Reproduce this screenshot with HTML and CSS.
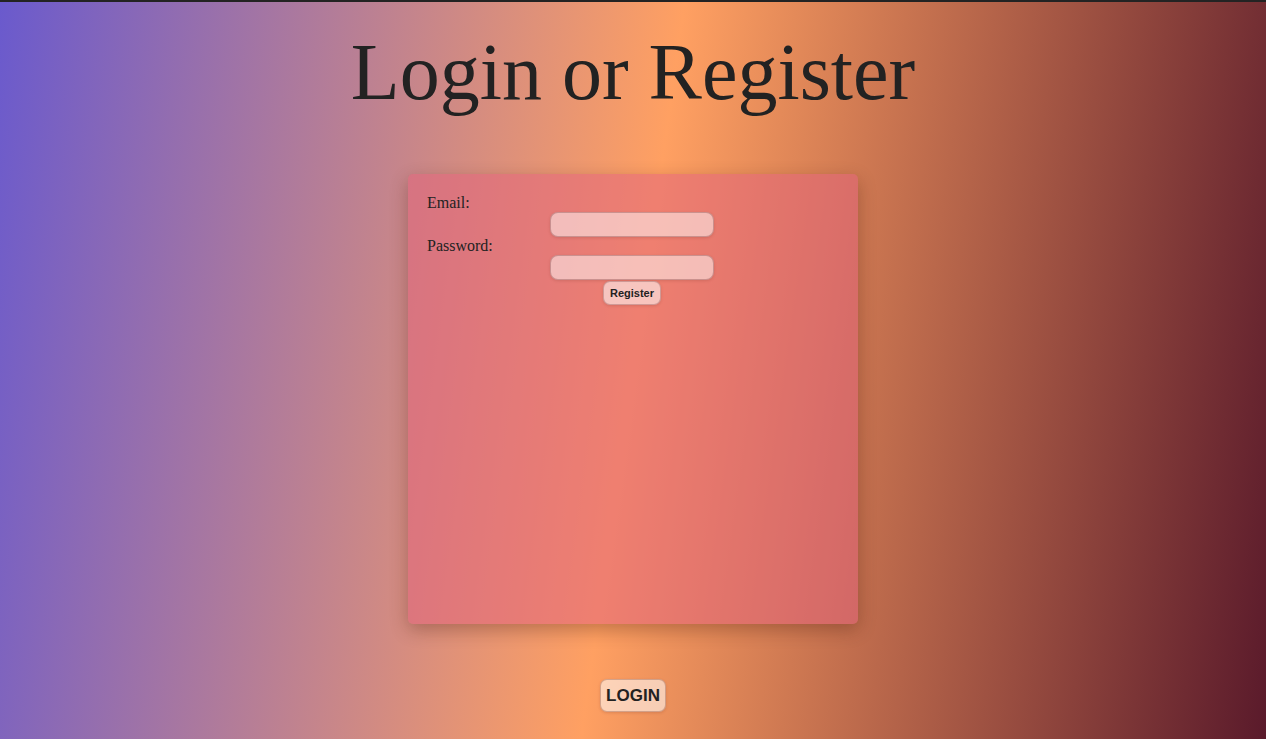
FILE: index.html
```html
<!DOCTYPE html>
<html lang="en">
<head>
    <meta charset="UTF-8">
    <meta name="viewport" content="width=device-width, initial-scale=1.0">
    <title>Login or Register</title>
    <link rel="stylesheet" href="styles.css">
</head>
<body>
    <h1 class="title">Login or Register</h1>
    <div class="form-card">
        <form id="register-form" class="register-form">
            <label for="email">Email:</label>
            <input type="email" id="email" name="email">
            <label for="password">Password:</label>
            <input type="password" id="password" name="password">
            <button type="submit" class="btn-register">Register</button>
        </form>
    </div>
    <button type="button" class="btn-login">LOGIN</button>
</body>
</html>
```

FILE: styles.css
```css
html {
    border-top: 2px solid #232323;
}
body {
    font-family: 'Liberation Serif', 'Times New Roman', serif;
    color: #222;
    background: linear-gradient(98deg, #6a5acd 0%, #ffa062 50%, #5a1a2b 100%);
    min-height: calc(100vh - 2px);
    margin: 0;
    padding: 0;
    display: flex;
    flex-direction: column;
    align-items: center;
}
.title {
    font-size: 80px;
    font-weight: normal;
    line-height: 92px;
    margin: 24px 0 56px;
    color: #222;
}
.form-card {
    width: 450px;
    height: 450px;
    box-sizing: border-box;
    padding: 20px 21px 20px 19px;
    border-radius: 5px;
    background-color: rgba(226, 100, 124, 0.55);
    box-shadow: 0 6px 18px rgba(60, 20, 10, 0.3);
}
.register-form {
    display: flex;
    flex-direction: column;
    align-items: center;
}
.register-form label {
    align-self: flex-start;
    font-size: 16px;
    line-height: 18px;
}
.register-form input {
    width: 164px;
    height: 25px;
    box-sizing: border-box;
    border: 1px solid rgba(150, 90, 90, 0.45);
    border-radius: 8px;
    background-color: rgba(255, 255, 255, 0.5);
    box-shadow: 0 1px 3px rgba(120, 50, 40, 0.2);
    margin: 0;
}
.btn-register {
    margin-top: 1px;
    height: 24px;
    padding: 0 6px;
    font-family: 'Liberation Sans', Arial, sans-serif;
    font-size: 11px;
    font-weight: bold;
    color: #222;
    border: 1px solid rgba(150, 90, 90, 0.4);
    border-radius: 7px;
    background-color: rgba(255, 255, 255, 0.55);
    box-shadow: 0 1px 3px rgba(120, 50, 40, 0.2);
    cursor: pointer;
}
.btn-login {
    margin-top: 55px;
    height: 33px;
    padding: 0 5px;
    font-family: 'Liberation Sans', Arial, sans-serif;
    font-size: 17px;
    font-weight: bold;
    color: #222;
    border: 1px solid rgba(150, 90, 70, 0.4);
    border-radius: 7px;
    background-color: rgba(255, 255, 255, 0.55);
    box-shadow: 0 1px 3px rgba(120, 50, 40, 0.2);
    cursor: pointer;
}
```
